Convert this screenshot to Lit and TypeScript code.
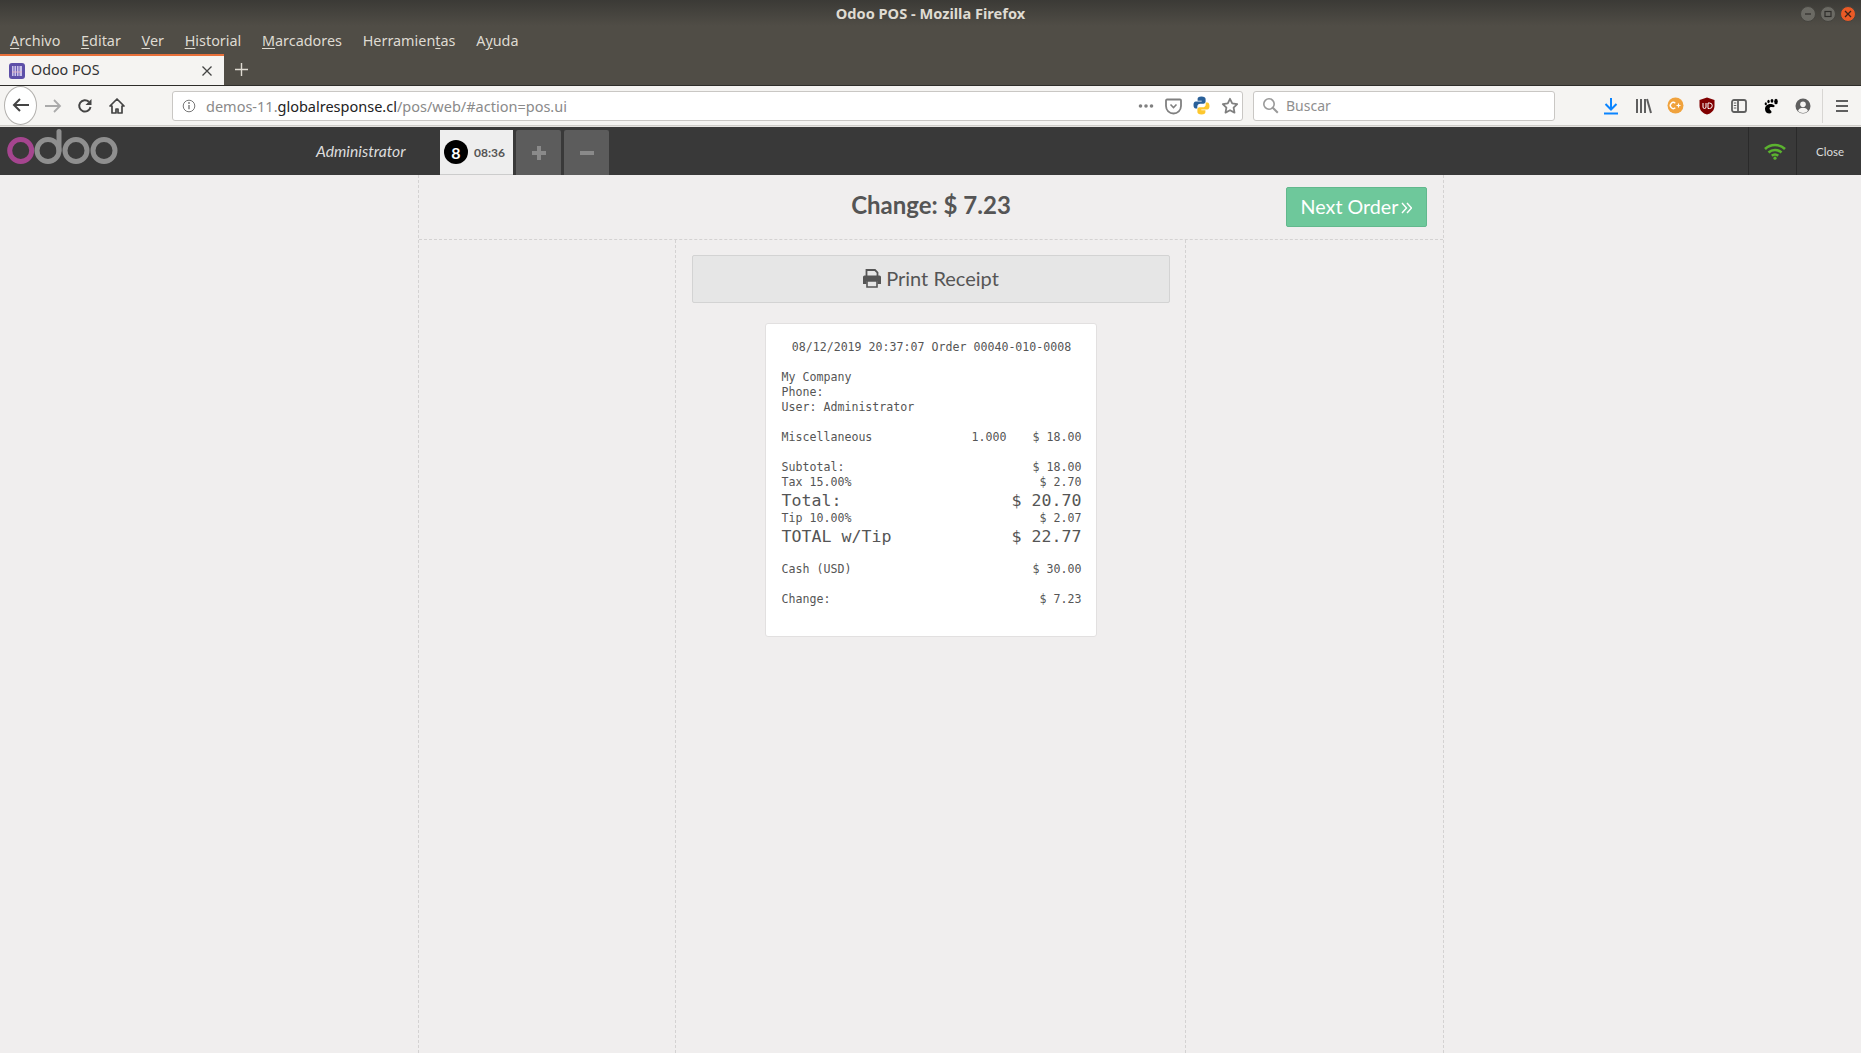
import { LitElement, html, css, svg } from "lit";
import { customElement } from "lit/decorators.js";

const ic = (w: number, h: number, body: unknown) =>
  html`<svg width=${w} height=${h} viewBox="0 0 ${w} ${h}">${body}</svg>`;

const menus: [string, string, string][] = [
  ["", "A", "rchivo"], ["", "E", "ditar"], ["", "V", "er"], ["", "H", "istorial"],
  ["", "M", "arcadores"], ["Herramien", "t", "as"], ["A", "y", "uda"],
];

@customElement("app-root")
export class AppRoot extends LitElement {
  static styles = css`
    :host { display: flex; flex-direction: column; height: 1053px; width: 1861px; overflow: hidden; background: #f0eeee; font-family: "Noto Sans", sans-serif; }
    .chrome { background: linear-gradient(#3b3a36, #504d46 26px, #504d46); height: 85px; display: flex; flex-direction: column; }
    .title { height: 27px; padding-bottom: 2px; box-sizing: border-box; display: flex; align-items: center; justify-content: center; color: #dfdbd2; font-size: 14.6px; font-weight: 700; position: relative; }
    .wbtns { position: absolute; right: 5px; top: 6px; display: flex; gap: 4px; }
    .wb { width: 16px; height: 16px; border-radius: 50%; background: #6b6a64; border: 1px solid #45443f; box-sizing: border-box; display: flex; align-items: center; justify-content: center; }
    .wb.x { background: #ea5a26; }
    .menu { height: 27px; display: flex; align-items: center; padding-left: 10px; gap: 20.7px; color: #dfdbd2; font-size: 14.4px; }
    .menu u { text-underline-offset: 2px; }
    .tabs { height: 31px; display: flex; align-items: stretch; }
    .tab { width: 224px; box-sizing: border-box; background: #f5f4f2; border-top: 2px solid #e8703a; display: flex; align-items: center; padding-left: 9px; color: #333; font-size: 14.3px; }
    .tab span { margin-left: 6px; flex: 1; margin-top: -2px; }
    .tab svg.close { margin-right: 11px; }
    .plus { margin-left: 11px; align-self: center; display: flex; }
    .toolbar { height: 41px; background: #f5f4f2; border-top: 1px solid #2e2d2a; border-bottom: 1px solid #cfcdc9; display: flex; align-items: center; box-sizing: border-box; position: relative; flex: none; }
    .back { width: 33px; height: 39px; margin-left: 4px; border-radius: 50%; background: #fff; border: 1px solid #b3b1ae; box-sizing: border-box; display: flex; align-items: center; justify-content: center; flex: none; margin-top: -1px; }
    .nav { display: flex; width: 32px; justify-content: center; flex: none; }
    .urlbar { margin-left: 39px; width: 1071px; height: 30px; box-sizing: border-box; background: #fff; border: 1px solid #c9c7c4; border-radius: 3px; display: flex; align-items: center; padding-left: 9px; flex: none; }
    .url { margin-left: 10px; font-size: 14.5px; color: #8a8a8a; flex: 1; }
    .url b { font-weight: 400; color: #222; }
    .uic { display: flex; align-items: center; gap: 11px; padding-right: 3px; }
    .search { margin-left: 10px; width: 302px; height: 30px; box-sizing: border-box; background: #fff; border: 1px solid #c9c7c4; border-radius: 3px; display: flex; align-items: center; padding-left: 8px; gap: 7px; font-size: 14px; color: #8f8f8f; flex: none; }
    .tools { display: flex; align-items: center; margin-left: 40px; flex: none; }
    .tools > * { width: 32px; display: flex; justify-content: center; }
    .sep { width: 1px !important; height: 34px; background: #d8d6d3; margin: 0 3px 0 3px; }
    .pos { height: 49px; background: #393939; border-top: 1px solid #e5e3e0; box-sizing: border-box; display: flex; align-items: stretch; font-family: Lato, sans-serif; flex: none; }
    .logo { width: 120px; flex: none; }
    .admin { margin-left: 196px; width: 124px; align-self: center; color: #ddd; font-style: italic; font-size: 15.7px; flex: none; }
    .order { margin-top: 3px; width: 73px; background: #eee; border-bottom: 1px solid #ccc; box-sizing: border-box; display: flex; align-items: center; padding-left: 4px; gap: 6px; color: #555; font-weight: 700; font-size: 12px; flex: none; }
    .badge { width: 24px; height: 24px; border-radius: 50%; background: #000; color: #fff; display: flex; align-items: center; justify-content: center; font-size: 16px; font-weight: 700; }
    .pm { margin: 3px 0 0 3px; width: 45px; background: #5c5c5c; display: flex; align-items: center; justify-content: center; border-radius: 2px 2px 0 0; flex: none; }
    .spacer { flex: 1; }
    .wifi { width: 49px; box-sizing: border-box; padding-left: 5px; border-left: 1px solid #2a2a2a; border-right: 1px solid #2a2a2a; display: flex; align-items: center; justify-content: center; }
    .closeb { width: 64px; box-sizing: border-box; padding-left: 2px; display: flex; align-items: center; justify-content: center; color: #ddd; font-size: 11.5px; }
    .screen { flex: 1; width: 1026px; margin-left: 418px; box-sizing: border-box; border-left: 1px dashed #d4d2d2; border-right: 1px dashed #d4d2d2; display: flex; flex-direction: column; font-family: Lato, sans-serif; min-height: 0; }
    .top { height: 65px; box-sizing: border-box; border-bottom: 1px dashed #d4d2d2; display: grid; grid-template-columns: 1fr auto 1fr; align-items: start; flex: none; }
    .change { color: #555; font-weight: 700; font-size: 24px; margin-top: 12px; line-height: 36px; }
    .next { justify-self: end; margin: 12px 16px 0 0; width: 141px; height: 40px; box-sizing: border-box; padding-bottom: 2px; background: #6ec89b; border: 1px solid #62b88d; border-radius: 2px; color: #fff; font-size: 19.7px; display: flex; align-items: center; justify-content: center; gap: 3px; }
    .next svg { margin-top: 4px; }
    .body { flex: 1; display: grid; grid-template-columns: 256px 511px 1fr; min-height: 0; }
    .mid { border-left: 1px dashed #d4d2d2; border-right: 1px dashed #d4d2d2; display: flex; flex-direction: column; align-items: center; padding-top: 15px; }
    .print { width: 478px; height: 48px; box-sizing: border-box; padding-bottom: 2px; background: #e6e6e6; border: 1px solid #d3d3d3; border-radius: 2px; display: flex; align-items: center; justify-content: center; gap: 4px; color: #555; font-size: 20px; flex: none; }
    .receipt { margin-top: 20px; width: 332px; box-sizing: border-box; background: #fff; border: 1px solid #e2e0e0; border-radius: 3px; padding: 16px 14px 29px 16px; color: #555; font-family: "DejaVu Sans Mono", monospace; font-size: 11.62px; line-height: 15px; flex: none; }
    .receipt .c { text-align: center; }
    .receipt .r { display: flex; justify-content: space-between; white-space: pre; }
    .receipt .g { margin-top: 15px; }
    .receipt .big { font-size: 16.6px; line-height: 21px; }
    .q { margin-left: auto; margin-right: 26px; }
  `;

  render() {
    return html`
      <div class="chrome">
        <div class="title">Odoo POS - Mozilla Firefox
          <div class="wbtns">
            <div class="wb">${ic(8, 8, svg`<path d="M1 4h6" stroke="#2f2e2b" stroke-width="1.2"/>`)}</div>
            <div class="wb">${ic(8, 8, svg`<rect x="1" y="1.5" width="6" height="5" fill="none" stroke="#2f2e2b" stroke-width="1.2"/>`)}</div>
            <div class="wb x">${ic(8, 8, svg`<path d="M1 1l6 6M7 1l-6 6" stroke="#3a2318" stroke-width="1.3"/>`)}</div>
          </div>
        </div>
        <div class="menu">${menus.map(([a, u, b]) => html`<span>${a}<u>${u}</u>${b}</span>`)}</div>
        <div class="tabs">
          <div class="tab">
            ${ic(16, 16, svg`<rect width="16" height="16" rx="3" fill="#5d50a8"/><path d="M3 3h10v10H3z" fill="#c9c3e8"/><path d="M5 3v10M7.5 3v10M10 3v10" stroke="#6a5db5" stroke-width="1"/><path d="M3 9h10" stroke="#e3b6c6" stroke-width="1.5" opacity=".6"/>`)}
            <span>Odoo POS</span>
            ${html`<svg class="close" width="12" height="12" viewBox="0 0 12 12"><path d="M1.5 1.5l9 9M10.5 1.5l-9 9" stroke="#444" stroke-width="1.3"/></svg>`}
          </div>
          <div class="plus">${ic(13, 13, svg`<path d="M6.5 0v13M0 6.5h13" stroke="#dfdbd2" stroke-width="1.4"/>`)}</div>
        </div>
      </div>
      <div class="toolbar">
        <div class="back">${ic(18, 16, svg`<path d="M8 2L2 8l6 6M2 8h15" fill="none" stroke="#444" stroke-width="2"/>`)}</div>
        <div class="nav">${ic(18, 16, svg`<path d="M10 2l6 6-6 6M16 8H1" fill="none" stroke="#aaa" stroke-width="1.8"/>`)}</div>
        <div class="nav">${ic(16, 16, svg`<path d="M13.5 9a5.7 5.7 0 1 1-1.6-5.2" fill="none" stroke="#444" stroke-width="2"/><path d="M14.5 1v6h-6z" fill="#444"/>`)}</div>
        <div class="nav">${ic(16, 16, svg`<path d="M8 1L1 8h2v7h4v-4h2v4h4V8h2z" fill="none" stroke="#444" stroke-width="1.7" stroke-linejoin="round"/>`)}</div>
        <div class="urlbar">
          ${ic(14, 14, svg`<circle cx="7" cy="7" r="5.8" fill="none" stroke="#777" stroke-width="1"/><path d="M7 6v4.2" stroke="#777" stroke-width="1.4"/><circle cx="7" cy="4" r=".9" fill="#777"/>`)}
          <div class="url">demos-11.<b>globalresponse.cl</b>/pos/web/#action=pos.ui</div>
          <div class="uic">
            ${ic(16, 16, svg`<circle cx="2.5" cy="8" r="1.8" fill="#808080"/><circle cx="8" cy="8" r="1.8" fill="#808080"/><circle cx="13.5" cy="8" r="1.8" fill="#808080"/>`)}
            ${ic(17, 18, svg`<path d="M2 2.5h13a1 1 0 0 1 1 1V9a7.5 7.5 0 0 1-15 0V3.5a1 1 0 0 1 1-1z" fill="none" stroke="#808080" stroke-width="1.8"/><path d="M5.5 7.5l3 3 3-3" fill="none" stroke="#808080" stroke-width="1.6"/>`)}
            ${ic(17, 19, svg`<path d="M8.5 0.5C5.5 0.5 4.6 1.5 4.6 3v1.8h4.1v.7H2.8C1.2 5.5 .5 7 .5 9s.8 3.6 2.2 3.6h1.6v-2c0-1.6 1.3-2.9 2.9-2.9h3.3c1.2 0 2.1-1 2.1-2.2V3c0-1.5-1.4-2.5-4.1-2.5z" fill="#2a6099"/><path d="M8.5 18.5c3 0 3.9-1 3.9-2.5v-1.8H8.3v-.7h5.9c1.6 0 2.3-1.5 2.3-3.5s-.8-3.6-2.2-3.6h-1.6v2c0 1.6-1.3 2.9-2.9 2.9H6.5c-1.2 0-2.1 1-2.1 2.2V16c0 1.5 1.4 2.5 4.1 2.5z" fill="#fdc72e"/>`)}
            ${ic(18, 18, svg`<path d="M9 1.8l2.2 4.6 5 .7-3.6 3.5.9 5L9 13.2l-4.5 2.4.9-5L1.800 7.100l5-.7z" fill="none" stroke="#808080" stroke-width="1.8" stroke-linejoin="round"/>`)}
          </div>
        </div>
        <div class="search">
          ${ic(17, 17, svg`<circle cx="7" cy="7" r="5.2" fill="none" stroke="#999" stroke-width="1.6"/><path d="M10.800 10.800l5 5" stroke="#999" stroke-width="2"/>`)}
          <span>Buscar</span>
        </div>
        <div class="tools">
          <div>${ic(16, 18, svg`<path d="M8 1v11M2.500 7l5.500 5.500L13.500 7" fill="none" stroke="#0a84ff" stroke-width="2"/><path d="M1 16.500h14" stroke="#0a84ff" stroke-width="2"/>`)}</div>
          <div>${ic(17, 16, svg`<path d="M2 1v14M6 1v14M10 1v14" stroke="#5f5f5f" stroke-width="2"/><path d="M12 1l4 14" stroke="#5f5f5f" stroke-width="2"/>`)}</div>
          <div>${html`<svg width="17" height="17" viewBox="0 0 17 17"><circle cx="8.500" cy="8.500" r="8" fill="#f0a23c"/><path d="M8.300 6.200a3 3 0 1 0 0 4.600" fill="none" stroke="#fff" stroke-width="1.400"/><path d="M9.500 8.500h4M11.500 6.500v4" stroke="#fff" stroke-width="1.200"/></svg>`}</div>
          <div>${ic(16, 18, svg`<path d="M8 .5l7.500 2.500v6c0 4.500-3.500 7.500-7.500 8.500C4 16.500.5 13.500.5 9V3z" fill="#800000"/><path d="M4 6v4a1.500 1.500 0 0 0 3 0V6M9 6v5.500h1.500a2.700 2.700 0 0 0 0-5.500z" fill="none" stroke="#fff" stroke-width="1"/>`)}</div>
          <div>${ic(16, 14, svg`<rect x="1" y="1" width="14" height="12" rx="2" fill="none" stroke="#5f5f5f" stroke-width="1.800"/><path d="M7 1v12" stroke="#5f5f5f" stroke-width="1.800"/><path d="M2.800 4h2.500M2.800 6.500h2.500M2.800 9h2.500" stroke="#5f5f5f" stroke-width="1.200"/>`)}</div>
          <div>${ic(14, 16, svg`<path d="M6.500 6c-3.500 0-5.500 2.500-5.500 5 0 3 2 4.500 4.500 4.500 1.500 0 2-.6 2-1.700 0-1.300-2-1.500-2-3.200 0-1 .7-1.600 1.700-1.600 1.200 0 2.300.8 3.300-.5C11.500 7.500 9 6 6.500 6z" fill="#000"/><ellipse cx="1.800" cy="5.800" rx="1.100" ry="1.500" fill="#000"/><ellipse cx="4.500" cy="3.500" rx="1.200" ry="1.700" fill="#000"/><ellipse cx="8" cy="2.800" rx="1.400" ry="1.900" fill="#000"/><ellipse cx="12" cy="3.500" rx="1.800" ry="2.800" fill="#000"/>`)}</div>
          <div>${ic(16, 16, svg`<circle cx="8" cy="8" r="7.500" fill="#5f5f5f"/><circle cx="8" cy="6.200" r="2.800" fill="#f5f4f2"/><path d="M3 13c.8-2.500 2.500-3.300 5-3.300s4.200.8 5 3.300c-1.300 1.300-3 2-5 2s-3.700-.7-5-2z" fill="#f5f4f2"/>`)}</div>
          <div class="sep"></div>
          <div>${ic(14, 14, svg`<path d="M1 2h12M1 7h12M1 12h12" stroke="#5f5f5f" stroke-width="2"/>`)}</div>
        </div>
      </div>
      <div class="pos">
        <div class="logo">
          <svg width="120" height="47" viewBox="0 0 120 47">
            <circle cx="20.700" cy="23.500" r="11" fill="none" stroke="#a5458f" stroke-width="5"/>
            <g fill="none" stroke="#8f8f8f" stroke-width="5">
              <circle cx="48" cy="23.500" r="11"/><path d="M59 23.500V4.500" stroke-linecap="round"/>
              <circle cx="76" cy="23.500" r="11"/><circle cx="104" cy="23.500" r="11"/>
            </g>
          </svg>
        </div>
        <div class="admin">Administrator</div>
        <div class="order"><div class="badge">8</div><span>08:36</span></div>
        <div class="pm">${ic(14, 14, svg`<path d="M7 0v14M0 7h14" stroke="#8a8a8a" stroke-width="4"/>`)}</div>
        <div class="pm">${ic(14, 14, svg`<path d="M0 7h14" stroke="#8a8a8a" stroke-width="4"/>`)}</div>
        <div class="spacer"></div>
        <div class="wifi">${ic(22, 17, svg`<g fill="none" stroke="#5bb32f" stroke-width="2.600"><path d="M1 6a14.500 14.500 0 0 1 20 0"/><path d="M4.500 9.500a9.500 9.500 0 0 1 13 0"/><path d="M7.800 12.700a4.800 4.800 0 0 1 6.400 0"/></g><circle cx="11" cy="15.200" r="1.600" fill="#5bb32f"/>`)}</div>
        <div class="closeb">Close</div>
      </div>
      <div class="screen">
        <div class="top">
          <div></div>
          <div class="change">Change: $ 7.23</div>
          <div class="next">Next Order ${ic(11, 12, svg`<path d="M1 1l4.500 5L1 11M6 1l4.500 5L6 11" fill="none" stroke="#fff" stroke-width="1.400"/>`)}</div>
        </div>
        <div class="body">
          <div></div>
          <div class="mid">
            <div class="print">
              ${ic(20, 20, svg`<path d="M4.500 8V2h8.500L15.500 4.500V8" fill="none" stroke="#555" stroke-width="1.800"/><path d="M1 9a1.500 1.500 0 0 1 1.500-1.500h15A1.500 1.500 0 0 1 19 9v7h-3.500v-3h-11v3H1z" fill="#555"/><path d="M5 13h10v6H5z" fill="none" stroke="#555" stroke-width="1.600"/>`)}
              <span>Print Receipt</span>
            </div>
            <div class="receipt">
              <div class="c">08/12/2019 20:37:07 Order 00040-010-0008</div>
              <div class="g">My Company</div>
              <div>Phone:</div>
              <div>User: Administrator</div>
              <div class="r g"><span>Miscellaneous</span><span class="q">1.000</span><span>$ 18.00</span></div>
              <div class="r g"><span>Subtotal:</span><span>$ 18.00</span></div>
              <div class="r"><span>Tax 15.00%</span><span>$ 2.70</span></div>
              <div class="r big"><span>Total:</span><span>$ 20.70</span></div>
              <div class="r"><span>Tip 10.00%</span><span>$ 2.07</span></div>
              <div class="r big"><span>TOTAL w/Tip</span><span>$ 22.77</span></div>
              <div class="r g"><span>Cash (USD)</span><span>$ 30.00</span></div>
              <div class="r g"><span>Change:</span><span>$ 7.23</span></div>
            </div>
          </div>
          <div></div>
        </div>
      </div>
    `;
  }
}
